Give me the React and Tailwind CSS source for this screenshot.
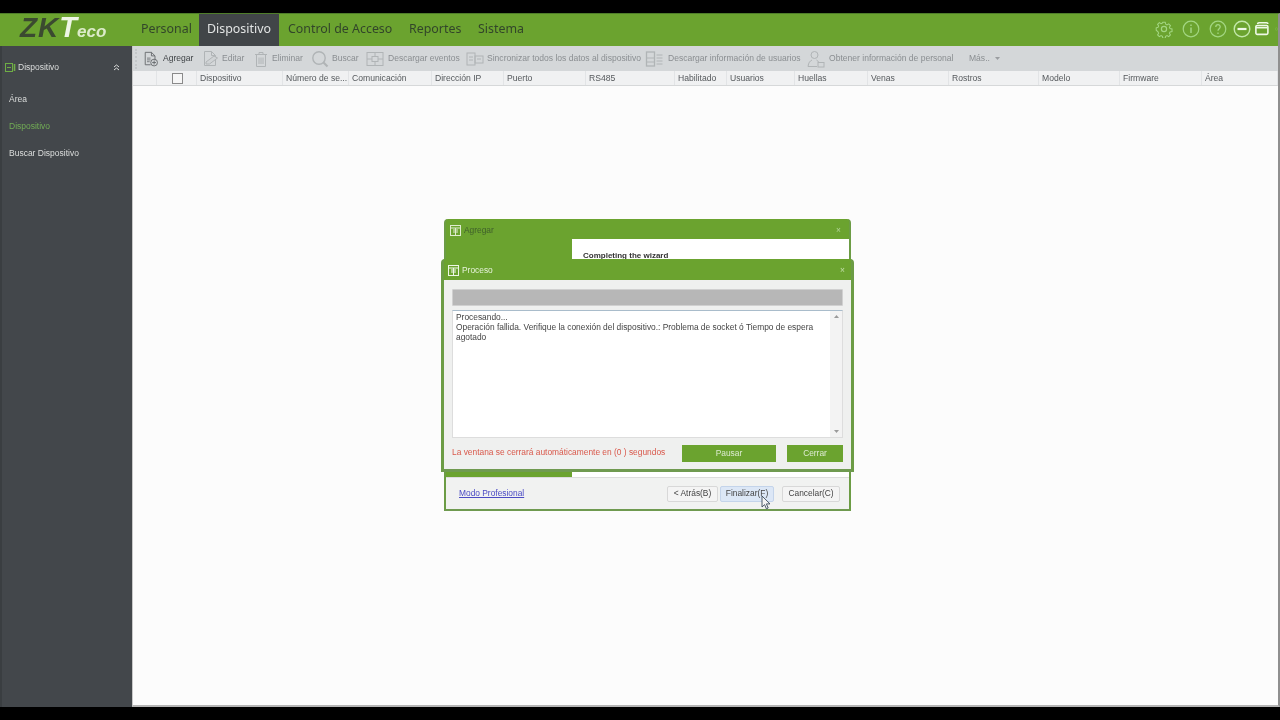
import React from "react";

const font = { fontFamily: '"Liberation Sans", Arial, sans-serif' };

function I({ children, w = 18, h = 18, c = "#b0b4b6", className = "" }) {
  return (
    <svg width={w} height={h} viewBox="0 0 18 18" fill="none" stroke={c} strokeWidth="1" className={"shrink-0 " + className}>
      {children}
    </svg>
  );
}

const icons = {
  add: (
    <I w={16} c="#63676a">
      <path d="M2.5 1.5h7l4 4v5M9.5 1.5v4h4M2.5 1.5v14h6" />
      <path d="M4.5 8h4M4.5 10h4M4.5 12h3" stroke="#8d9194" strokeWidth="1.4" />
      <circle cx="12.5" cy="13" r="3.8" />
      <path d="M12.5 10.8v4.4M10.3 13h4.4" />
    </I>
  ),
  edit: (
    <I>
      <path d="M2.5 1.5h7l4 4v10h-11z" />
      <path d="M9.5 1.5v4h4" />
      <path d="M4 12l8-6 3.5 2-8 6H4z" fill="#d0d3d5" />
    </I>
  ),
  del: (
    <I>
      <path d="M3 4.5h12M7 4.5V2.5h4v2M4.5 4.5v12h9v-12" />
      <path d="M7 7.5v6.5M9 7.5v6.5M11 7.5v6.5" />
    </I>
  ),
  search: (
    <I>
      <circle cx="8" cy="8" r="6.2" strokeWidth="1.4" />
      <path d="M12.5 12.5l4 4" strokeWidth="2.2" />
    </I>
  ),
  sync: (
    <I>
      <rect x="1" y="2.5" width="16" height="13" />
      <path d="M1 9h5M12 9h5M9 2.5v4M9 11.5v4" />
      <rect x="6" y="6.5" width="6" height="5" />
    </I>
  ),
  sync2: (
    <I>
      <rect x="1" y="3" width="8" height="12" />
      <rect x="9" y="6" width="8" height="7" />
      <path d="M3 7h4M3 10h4M11 9h4" />
    </I>
  ),
  users: (
    <I w={19}>
      <rect x="1" y="2" width="8" height="14" strokeWidth="1.3" />
      <path d="M1 8h8M1 12h8M11 5h6M11 8h6M11 11h6M11 14h6" />
    </I>
  ),
  person: (
    <I w={19}>
      <circle cx="8" cy="5" r="3.5" />
      <path d="M1.5 16.5c.5-4 2-5.5 4-6.5M10 10c1 .5 1.5 1 2 2M1.5 16.5h9" />
      <rect x="11.5" y="12.5" width="6" height="4.5" />
    </I>
  ),
};

const tools = [
  { i: "add", t: "Agregar", dark: true, cls: "ml-[5px] w-[59px] gap-[4px]" },
  { i: "edit", t: "Editar", cls: "w-[50px] gap-[2px]" },
  { i: "del", t: "Eliminar", cls: "w-[59px] gap-[2px]" },
  { i: "search", t: "Buscar", cls: "w-[55px] gap-[3px]" },
  { i: "sync", t: "Descargar eventos", cls: "w-[100px] gap-[4px]" },
  { i: "sync2", t: "Sincronizar todos los datos al dispositivo", cls: "w-[179px] gap-[3px]" },
  { i: "users", t: "Descargar información de usuarios", cls: "w-[161px] gap-[4px]" },
  { i: "person", t: "Obtener información de personal", cls: "w-[163px] gap-[4px]" },
];

const cols = [
  ["", "w-[24px]"],
  ["", "w-[40px]"],
  ["Dispositivo", "w-[86px]"],
  ["Número de se...", "w-[66px]"],
  ["Comunicación", "w-[83px]"],
  ["Dirección IP", "w-[72px]"],
  ["Puerto", "w-[82px]"],
  ["RS485", "w-[89px]"],
  ["Habilitado", "w-[52px]"],
  ["Usuarios", "w-[68px]"],
  ["Huellas", "w-[73px]"],
  ["Venas", "w-[81px]"],
  ["Rostros", "w-[90px]"],
  ["Modelo", "w-[81px]"],
  ["Firmware", "w-[82px]"],
  ["Área", "w-[76px]"],
];

function WinIcon({ light }) {
  return (
    <svg width="11" height="11" viewBox="0 0 11 11" fill="none" stroke={light ? "#eef6e6" : "#dfeccf"} strokeWidth="1" className="shrink-0">
      <rect x="0.5" y="0.5" width="10" height="10" />
      <path d="M0.5 3h10M3 5h5M3 7h5M5.5 3v7" />
    </svg>
  );
}

function TopIcon({ children, w = 18 }) {
  return (
    <svg width={w} height="18" viewBox="0 0 18 18" fill="none" stroke="#a3d682" strokeWidth="1.2" className="shrink-0">
      {children}
    </svg>
  );
}

export default function App() {
  return (
    <div className="h-[720px] w-[1280px] overflow-hidden bg-black">
      <div className="relative h-[720px] w-[1280px] bg-black flex flex-col pt-[13px] pb-[13px] blur-[0.5px]" style={font}>
        {/* top bar */}
        <header className="h-[33px] shrink-0 flex bg-[#6ba32f] border-t border-[#4f7d2a] border-r-2 border-r-[#8f8f8f]">
          <div className="w-[141px] shrink-0 flex items-baseline pl-[20px] italic font-bold leading-[26px] select-none">
            <span className="text-[28px] text-[#3b4a30] tracking-[1px]">ZK</span>
            <span className="text-[29px] text-[#eef6e6]">T</span>
            <span className="text-[17px] text-[#dcebc9]">eco</span>
          </div>
          <nav className="flex text-[12.4px]" style={{ fontFamily: '"Noto Sans", sans-serif' }}>
            <div className="w-[58px] flex items-center pb-[2px] text-[#32452a]">Personal</div>
            <div className="w-[80px] flex items-center justify-center pb-[2px] bg-[#414548] text-[#e2e4e4]">Dispositivo</div>
            <div className="ml-[9px] w-[121px] flex items-center pb-[2px] text-[#32452a] whitespace-nowrap">Control de Acceso</div>
            <div className="w-[69px] flex items-center pb-[2px] text-[#32452a]">Reportes</div>
            <div className="flex items-center pb-[2px] text-[#32452a]">Sistema</div>
          </nav>
          <div className="ml-auto flex items-center gap-[9px] overflow-hidden pb-[2px]">
            <TopIcon>
              <circle cx="9" cy="9" r="2.6" />
              <path d="M7.6 1.2h2.8l.5 2.3 1.5.7 2-1.2 2 2-1.2 2 .7 1.5 2.3.5v2.8l-2.3.5-.7 1.5 1.2 2-2 2-2-1.2-1.5.7-.5 2.3H7.6l-.5-2.3-1.5-.7-2 1.2-2-2 1.2-2-.7-1.5L0 10.4V7.6l2.1-.5.7-1.5-1.2-2 2-2 2 1.2 1.5-.7z" transform="translate(1.2 1.2) scale(.87)" />
            </TopIcon>
            <TopIcon>
              <circle cx="9" cy="9" r="7.8" />
              <path d="M9 7.5v5.5M9 4.5v1.5" strokeWidth="1.5" />
            </TopIcon>
            <TopIcon>
              <circle cx="9" cy="9" r="7.8" />
              <path d="M6.8 7c0-3 4.4-3 4.4-.2 0 1.9-2.2 1.9-2.2 4M9 12.5V14" strokeWidth="1.3" />
            </TopIcon>
            <div className="flex items-center gap-[4px] -ml-[3px]">
              <TopIcon>
                <circle cx="9" cy="9" r="7.8" stroke="#c3e8aa" strokeWidth="1.4" />
                <path d="M4.5 9h9" stroke="#eef8e6" strokeWidth="2.2" />
              </TopIcon>
              <TopIcon w={16}>
                <path d="M3 3.5c0-1 .5-1.5 1.5-1.5H13c1 0 1.5.5 1.5 1.5" stroke="#eef8e6" strokeWidth="1.8" />
                <rect x="1" y="5" width="13.5" height="10" rx="1.5" stroke="#eef8e6" strokeWidth="1.8" />
                <path d="M1 7.5h13" stroke="#eef8e6" strokeWidth="1.8" />
              </TopIcon>
              <TopIcon w={3}>
                <circle cx="9" cy="9" r="7.8" />
              </TopIcon>
            </div>
          </div>
        </header>

        <div className="flex-1 flex min-h-0">
          {/* sidebar */}
          <aside className="w-[132px] shrink-0 bg-[#43474b] border-l-2 border-[#3a3e41] text-[8.5px] text-[#dcdedd]">
            <div className="h-[40px] flex items-center pt-[2px] pl-[3px] pr-[12px]">
              <svg width="11" height="9" viewBox="0 0 11 9" fill="none" stroke="#6fae45" strokeWidth="1" className="shrink-0">
                <rect x="0.5" y="0.5" width="7" height="8" />
                <path d="M9.5 1v7" strokeWidth="1.6" />
                <path d="M2 4.5h4" />
              </svg>
              <span className="ml-[2px]">Dispositivo</span>
              <svg width="7" height="7" viewBox="0 0 7 7" fill="none" stroke="#dcdedd" strokeWidth="1" className="ml-auto">
                <path d="M1 3l2.5-2L6 3M1 6l2.5-2L6 6" />
              </svg>
            </div>
            <div className="pl-[7px] flex flex-col">
              <div className="h-[27px] flex items-center">Área</div>
              <div className="h-[27px] flex items-center text-[#72ad55]">Dispositivo</div>
              <div className="h-[27px] flex items-center">Buscar Dispositivo</div>
            </div>
          </aside>

          {/* main */}
          <main className="flex-1 flex flex-col bg-[#fcfcfc] border-l border-[#c8c8c8] border-r-2 border-r-[#8f8f8f] border-b-2 border-b-[#b5b5b5] min-w-0">
            <div className="h-[25px] shrink-0 bg-[#d4d7d9] flex items-center text-[8.55px] text-[#8a8e91] whitespace-nowrap">
              <div className="ml-[2px] w-[3px] h-[20px] shrink-0 border-l-2 border-dotted border-[#c4c7c9]" />
              {tools.map((x) => (
                <div key={x.t} className={"flex items-center shrink-0 " + x.cls + (x.dark ? " text-[#3f4346]" : "")}>
                  {icons[x.i]}
                  <span>{x.t}</span>
                </div>
              ))}
              <div className="flex items-center gap-[5px]">
                <span>Más..</span>
                <svg width="5" height="3" viewBox="0 0 5 3" fill="#9a9da0"><path d="M0 0h5L2.5 3z" /></svg>
              </div>
            </div>
            <div className="h-[15px] shrink-0 flex bg-[#f0f1f2] border-b border-[#d6d8d9] text-[8.6px] text-[#55595c] whitespace-nowrap">
              {cols.map(([t, w], idx) => (
                <div key={idx} className={"shrink-0 flex items-center pl-[3px] border-r border-[#e2e4e6] overflow-hidden " + w + (idx === 1 ? " justify-center pl-0" : "")}>
                  {idx === 1 ? <span className="block w-[11px] h-[11px] -ml-[2px] bg-[#f6f6f6] border border-[#8a8a8a]" /> : t}
                </div>
              ))}
            </div>
            <div className="flex-1" />
          </main>
        </div>

        {/* Back dialog: Agregar */}
        <section className="absolute left-[444px] top-[219px] w-[407px] h-[292px] rounded-t-[4px] bg-[#6ba32f] border-b-2 border-x-2 border-b-[#6f9a50] border-x-[#6c9c45] flex flex-col text-[8.4px]">
          <div className="h-[20px] shrink-0 flex items-center gap-[3px] pt-[2px] pl-[4px] pr-[8px] text-[#3f5f2b]">
            <WinIcon />
            <span>Agregar</span>
            <span className="ml-auto text-[#b5d69b]">×</span>
          </div>
          <div className="flex-1 flex flex-col min-h-0 bg-[#f1f2f1]">
            <div className="flex-1 flex min-h-0">
              <div className="w-[126px] shrink-0 bg-[#6ba32f]" />
              <div className="flex-1 bg-white pl-[11px] pt-[11px] font-bold text-[8px] text-[#333]">Completing the wizard</div>
            </div>
            <div className="h-[32px] shrink-0 flex items-center pl-[13px] pr-[9px] border-t border-[#dcdcdc] text-[#444]">
              <a className="text-[#4b4bc4] underline">Modo Profesional</a>
              <button className="ml-auto w-[51px] h-[16px] bg-[#f4f4f4] border border-[#d8d8d8] rounded-[2px]">&lt; Atrás(B)</button>
              <button className="ml-[2px] w-[54px] h-[16px] bg-[#dce7f6] border border-[#c4d4ea] rounded-[2px]">Finalizar(F)</button>
              <button className="ml-[8px] w-[58px] h-[16px] bg-[#f4f4f4] border border-[#d8d8d8] rounded-[2px]">Cancelar(C)</button>
            </div>
          </div>
        </section>

        {/* Front dialog: Proceso */}
        <section className="absolute left-[441px] top-[259px] w-[413px] h-[213px] rounded-t-[4px] bg-[#6ba32f] border-x-[3px] border-b-[3px] border-x-[#6c9c45] border-b-[#6f9a50] flex flex-col text-[8.4px]">
          <div className="h-[21px] shrink-0 flex items-center gap-[3px] pt-[2px] pl-[4px] pr-[6px] text-[#e6f2da]">
            <WinIcon light />
            <span>Proceso</span>
            <span className="ml-auto text-[#c5e0ad]">×</span>
          </div>
          <div className="flex-1 bg-[#eff0ef] px-[8px] pt-[9px] flex flex-col min-h-0">
            <div className="h-[17px] shrink-0 bg-[#b7b7b7] border border-[#d0d0d0] rounded-[1px]" />
            <div className="mt-[4px] h-[128px] shrink-0 flex bg-white border border-[#dddddd] border-t-[#a9bccb]">
              <div className="flex-1 pl-[3px] pr-[10px] pt-[1px] text-[#444] leading-[10px]">
                Procesando...
                <br />
                Operación fallida. Verifique la conexión del dispositivo.: Problema de socket ó Tiempo de espera agotado
              </div>
              <div className="w-[12px] shrink-0 bg-[#f3f3f3] flex flex-col items-center justify-between py-[4px]">
                <svg width="5" height="3" viewBox="0 0 5 3" fill="#9a9a9a"><path d="M2.5 0L5 3H0z" /></svg>
                <svg width="5" height="3" viewBox="0 0 5 3" fill="#9a9a9a"><path d="M0 0h5L2.5 3z" /></svg>
              </div>
            </div>
            <div className="mt-[7px] flex items-center">
              <span className="text-[#d9584b] -mt-[2px]">La ventana se cerrará automáticamente en (0 ) segundos</span>
              <button className="ml-auto w-[94px] h-[17px] bg-[#6ba32f] text-[#dcebd0]">Pausar</button>
              <button className="ml-[11px] w-[56px] h-[17px] bg-[#6ba32f] text-[#dcebd0]">Cerrar</button>
            </div>
          </div>
        </section>

        {/* cursor */}
        <svg width="11" height="15" viewBox="0 0 11 15" className="absolute left-[761px] top-[495px]">
          <path d="M1 1v11l2.6-2.4 1.8 4.2 1.8-.8-1.8-4.1H9z" fill="#f4f4f4" stroke="#3a4a5a" strokeWidth="0.9" />
        </svg>
      </div>
    </div>
  );
}
